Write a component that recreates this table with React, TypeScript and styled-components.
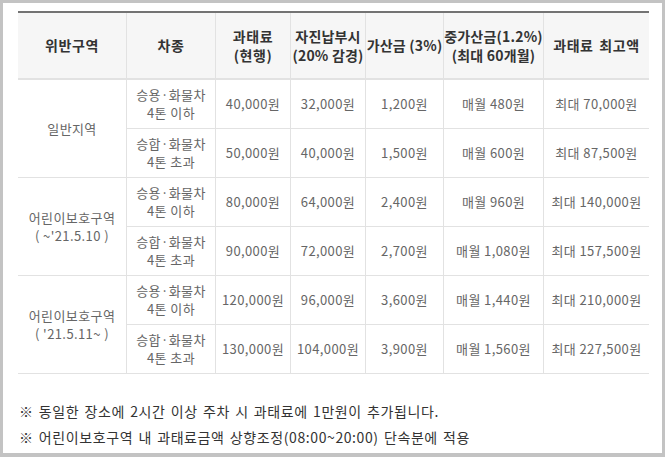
import { Fragment } from "react";
import styled, { createGlobalStyle } from "styled-components";

const GlobalStyle = createGlobalStyle`
  html, body {
    margin: 0;
    padding: 0;
    background: #ffffff;
  }
  body {
    font-family: "Noto Sans CJK KR", "Noto Sans", sans-serif;
  }
`;

const Frame = styled.div`
  width: 665px;
  height: 457px;
  box-sizing: border-box;
  border: 3px solid #c3c3c3;
  border-bottom-width: 4px;
  padding: 8px 13px 0 15px;
  background: #fff;
`;

const Table = styled.table`
  width: 631px;
  table-layout: fixed;
  border-collapse: separate;
  border-spacing: 0;
  border-top: 2px solid #737373;
`;

const Col = styled.col<{ $w: number }>`
  width: ${(p) => p.$w}px;
`;

const Th = styled.th<{ $first?: boolean; $tight?: boolean }>`
  height: 65px;
  padding: 0;
  background: #f6f6f6;
  border-bottom: 2px solid #e2e2e2;
  border-left: ${(p) => (p.$first ? "none" : "1px solid #e2e2e2")};
  color: #333;
  font-size: 14px;
  font-weight: 700;
  line-height: 19px;
  letter-spacing: ${(p) => (p.$tight ? "0.2px" : "0.6px")};
  word-spacing: ${(p) => (p.$tight ? "0" : "2px")};
  text-align: center;
  vertical-align: middle;
  white-space: nowrap;
`;

const Tr = styled.tr`
  height: 49px;
`;

const Td = styled.td<{ $first?: boolean }>`
  padding: 0;
  border-bottom: 1px solid #e2e2e2;
  border-left: ${(p) => (p.$first ? "none" : "1px solid #e2e2e2")};
  color: #666;
  font-size: 13px;
  line-height: 18px;
  letter-spacing: 0.4px;
  text-align: center;
  vertical-align: middle;
  white-space: nowrap;
`;

const Notes = styled.div`
  display: flex;
  flex-direction: column;
  gap: 8px;
  margin-top: 28px;
  padding-left: 1px;
`;

const Note = styled.p`
  margin: 0;
  color: #333;
  font-size: 14px;
  line-height: 18px;
  letter-spacing: 0.6px;
  word-spacing: 1.5px;
`;

const widths = [108, 89, 75, 75, 78, 100, 106];

const headers = [
  ["위반구역"],
  ["차종"],
  ["과태료", "(현행)"],
  ["자진납부시", "(20% 감경)"],
  ["가산금 (3%)"],
  ["중가산금(1.2%)", "(최대 60개월)"],
  ["과태료 최고액"],
];

interface Row {
  car: string[];
  fee: string;
  self: string;
  add: string;
  monthly: string;
  max: string;
}

interface Zone {
  name: string[];
  rows: Row[];
}

const light = ["승용·화물차", "4톤 이하"];
const heavy = ["승합·화물차", "4톤 초과"];

const zones: Zone[] = [
  {
    name: ["일반지역"],
    rows: [
      { car: light, fee: "40,000원", self: "32,000원", add: "1,200원", monthly: "매월 480원", max: "최대 70,000원" },
      { car: heavy, fee: "50,000원", self: "40,000원", add: "1,500원", monthly: "매월 600원", max: "최대 87,500원" },
    ],
  },
  {
    name: ["어린이보호구역", "( ~'21.5.10 )"],
    rows: [
      { car: light, fee: "80,000원", self: "64,000원", add: "2,400원", monthly: "매월 960원", max: "최대 140,000원" },
      { car: heavy, fee: "90,000원", self: "72,000원", add: "2,700원", monthly: "매월 1,080원", max: "최대 157,500원" },
    ],
  },
  {
    name: ["어린이보호구역", "( '21.5.11~ )"],
    rows: [
      { car: light, fee: "120,000원", self: "96,000원", add: "3,600원", monthly: "매월 1,440원", max: "최대 210,000원" },
      { car: heavy, fee: "130,000원", self: "104,000원", add: "3,900원", monthly: "매월 1,560원", max: "최대 227,500원" },
    ],
  },
];

function Lines({ lines }: { lines: string[] }) {
  return (
    <>
      {lines.map((l, i) => (
        <Fragment key={i}>
          {i > 0 && <br />}
          {l}
        </Fragment>
      ))}
    </>
  );
}

export default function App() {
  return (
    <>
      <GlobalStyle />
      <Frame>
        <Table>
          <colgroup>
            {widths.map((w, i) => (
              <Col key={i} $w={w} />
            ))}
          </colgroup>
          <thead>
            <tr>
              {headers.map((h, i) => (
                <Th key={i} $first={i === 0} $tight={i >= 3 && i <= 5}>
                  <Lines lines={h} />
                </Th>
              ))}
            </tr>
          </thead>
          <tbody>
            {zones.map((z, zi) =>
              z.rows.map((r, ri) => (
                <Tr key={`${zi}-${ri}`}>
                  {ri === 0 && (
                    <Td $first rowSpan={z.rows.length}>
                      <Lines lines={z.name} />
                    </Td>
                  )}
                  <Td>
                    <Lines lines={r.car} />
                  </Td>
                  <Td>{r.fee}</Td>
                  <Td>{r.self}</Td>
                  <Td>{r.add}</Td>
                  <Td>{r.monthly}</Td>
                  <Td>{r.max}</Td>
                </Tr>
              ))
            )}
          </tbody>
        </Table>
        <Notes>
          <Note>※ 동일한 장소에 2시간 이상 주차 시 과태료에 1만원이 추가됩니다.</Note>
          <Note>※ 어린이보호구역 내 과태료금액 상향조정(08:00~20:00) 단속분에 적용</Note>
        </Notes>
      </Frame>
    </>
  );
}
